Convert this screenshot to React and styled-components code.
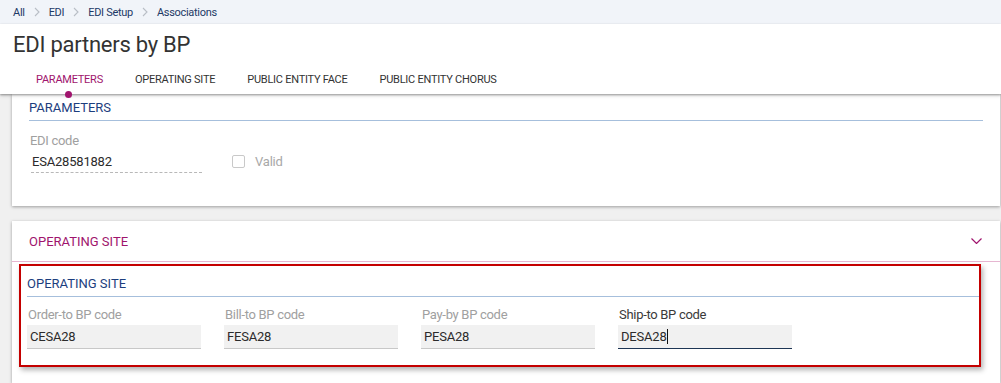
import React from 'react'
import styled, { createGlobalStyle } from 'styled-components'

const Global = createGlobalStyle`
  body {
    margin: 0;
    background: #f0f0f0;
    font-family: Roboto, "Liberation Sans", sans-serif;
  }
`

const Breadcrumb = styled.div`
  height: 24px;
  background: #f1f4f9;
  display: flex;
  align-items: center;
  padding-left: 13px;
  font-size: 11px;
  letter-spacing: -0.3px;
  color: #1d3966;
  gap: 9px;
`

const Sep = () => (
  <svg width="6" height="10" viewBox="0 0 6 10">
    <path d="M1 1 L5 5 L1 9" fill="none" stroke="#b9bec6" strokeWidth="1.1" />
  </svg>
)

const Header = styled.div`
  background: #fff;
  position: relative;
  z-index: 2;
  box-shadow: 0 1px 2px rgba(0, 0, 0, 0.35), 0 2px 4px rgba(0, 0, 0, 0.12);
`

const Title = styled.h1`
  margin: 0;
  padding: 8px 0 0 13px;
  height: 27px;
  font-size: 22px;
  line-height: 26px;
  font-weight: 400;
  color: #333;
  letter-spacing: -0.25px;
`

const Tabs = styled.div`
  display: flex;
  padding-left: 20px;
  height: 35px;
`

const Tab = styled.div`
  position: relative;
  padding: 14px 16px 0;
  font-size: 11px;
  line-height: 13px;
  letter-spacing: -0.25px;
  color: ${p => (p.active ? '#a0146d' : '#333')};
`

const Dot = styled.span`
  position: absolute;
  left: 50%;
  bottom: -4px;
  width: 7px;
  height: 7px;
  margin-left: -4px;
  border-radius: 50%;
  background: #a0146d;
`

const Content = styled.div`
  padding: 0 1px 0 12px;
  display: flex;
  flex-direction: column;
  gap: 15px;
`

const Card = styled.div`
  background: #fff;
  box-shadow: 0 1px 3px rgba(0, 0, 0, 0.35);
`

const SectionBody = styled.div`
  padding: ${p => p.pad || '0 17px 0 17px'};
  height: ${p => p.h}px;
`

const SectionTitle = styled.div`
  font-size: 13px;
  line-height: 16px;
  color: #1c3e7e;
  padding-top: ${p => p.top}px;
  padding-bottom: 4px;
  border-bottom: 1px solid #a6bfdc;
`

const Row = styled.div`
  display: flex;
  gap: 23px;
  padding-top: ${p => p.top}px;
`

const Field = styled.div`
  width: 174px;
  display: flex;
  flex-direction: column;
`

const Label = styled.div`
  font-size: 13px;
  line-height: 16px;
  letter-spacing: -0.3px;
  color: ${p => (p.dark ? '#3a3a3a' : '#a0a0a0')};
  padding-left: 1px;
`

const Value = styled.div`
  height: 24px;
  margin-top: 2px;
  box-sizing: border-box;
  padding: 4px 3px 0;
  font-size: 13px;
  line-height: 16px;
  letter-spacing: -0.2px;
  color: #2b2b2b;
  background: #f1f1f1;
  border-bottom: 1px solid ${p => (p.focused ? '#1d3554' : '#c8c8c8')};
`

const ReadValue = styled.div`
  height: 23px;
  width: 171px;
  margin: 1px 0 0 2px;
  box-sizing: border-box;
  padding: 4px 1px 0;
  font-size: 13px;
  line-height: 16px;
  letter-spacing: -0.2px;
  color: #2b2b2b;
  border-bottom: 1px dashed #b8b8b8;
`

const Caret = styled.span`
  display: inline-block;
  width: 1px;
  height: 15px;
  background: #111;
  vertical-align: -3px;
`

const CheckWrap = styled.label`
  display: flex;
  align-items: center;
  gap: 10px;
  margin: 16px 0 0 6px;
  font-size: 13px;
  color: #a8a8a8;
  letter-spacing: -0.2px;
`

const Box = styled.span`
  width: 11px;
  height: 11px;
  border: 1px solid #c9c9c9;
  border-radius: 2px;
`

const CardHeader = styled.div`
  height: 40px;
  display: flex;
  align-items: center;
  justify-content: space-between;
  padding: 0 18px 0 17px;
  border-bottom: 1px solid #e6b6d1;
  font-size: 13px;
  color: #a0146d;
`

const Highlight = styled.div`
  margin: 2px 19px 0 7px;
  height: 99px;
  border: 2px solid #c40000;
  box-shadow: 2px 3px 5px rgba(0, 0, 0, 0.3);
  padding: 0 0 0 6px;
`

export default function App() {
  return (
    <>
      <Global />
      <Breadcrumb>
        <span>All</span><Sep />
        <span>EDI</span><Sep />
        <span>EDI Setup</span><Sep />
        <span>Associations</span>
      </Breadcrumb>
      <Header>
        <Title>EDI partners by BP</Title>
        <Tabs>
          <Tab active>PARAMETERS<Dot /></Tab>
          <Tab>OPERATING SITE</Tab>
          <Tab>PUBLIC ENTITY FACE</Tab>
          <Tab>PUBLIC ENTITY CHORUS</Tab>
        </Tabs>
      </Header>
      <Content>
        <Card>
          <SectionBody h={112}>
            <SectionTitle top={6}>PARAMETERS</SectionTitle>
            <Row top={12}>
              <Field>
                <Label>EDI code</Label>
                <ReadValue>ESA28581882</ReadValue>
              </Field>
              <CheckWrap>
                <Box />
                Valid
              </CheckWrap>
            </Row>
          </SectionBody>
        </Card>
        <Card>
          <CardHeader>
            OPERATING SITE
            <svg width="11" height="6" viewBox="0 0 11 6">
              <path d="M0.5 0.5 L5.5 5.5 L10.5 0.5" fill="none" stroke="#a0146d" strokeWidth="1.2" />
            </svg>
          </CardHeader>
          <SectionBody h={119} pad="0">
            <Highlight>
              <SectionTitle top={10}>OPERATING SITE</SectionTitle>
              <Row top={10}>
                <Field>
                  <Label>Order-to BP code</Label>
                  <Value>CESA28</Value>
                </Field>
                <Field>
                  <Label>Bill-to BP code</Label>
                  <Value>FESA28</Value>
                </Field>
                <Field>
                  <Label>Pay-by BP code</Label>
                  <Value>PESA28</Value>
                </Field>
                <Field>
                  <Label dark>Ship-to BP code</Label>
                  <Value focused>DESA28<Caret /></Value>
                </Field>
              </Row>
            </Highlight>
          </SectionBody>
        </Card>
      </Content>
    </>
  )
}
